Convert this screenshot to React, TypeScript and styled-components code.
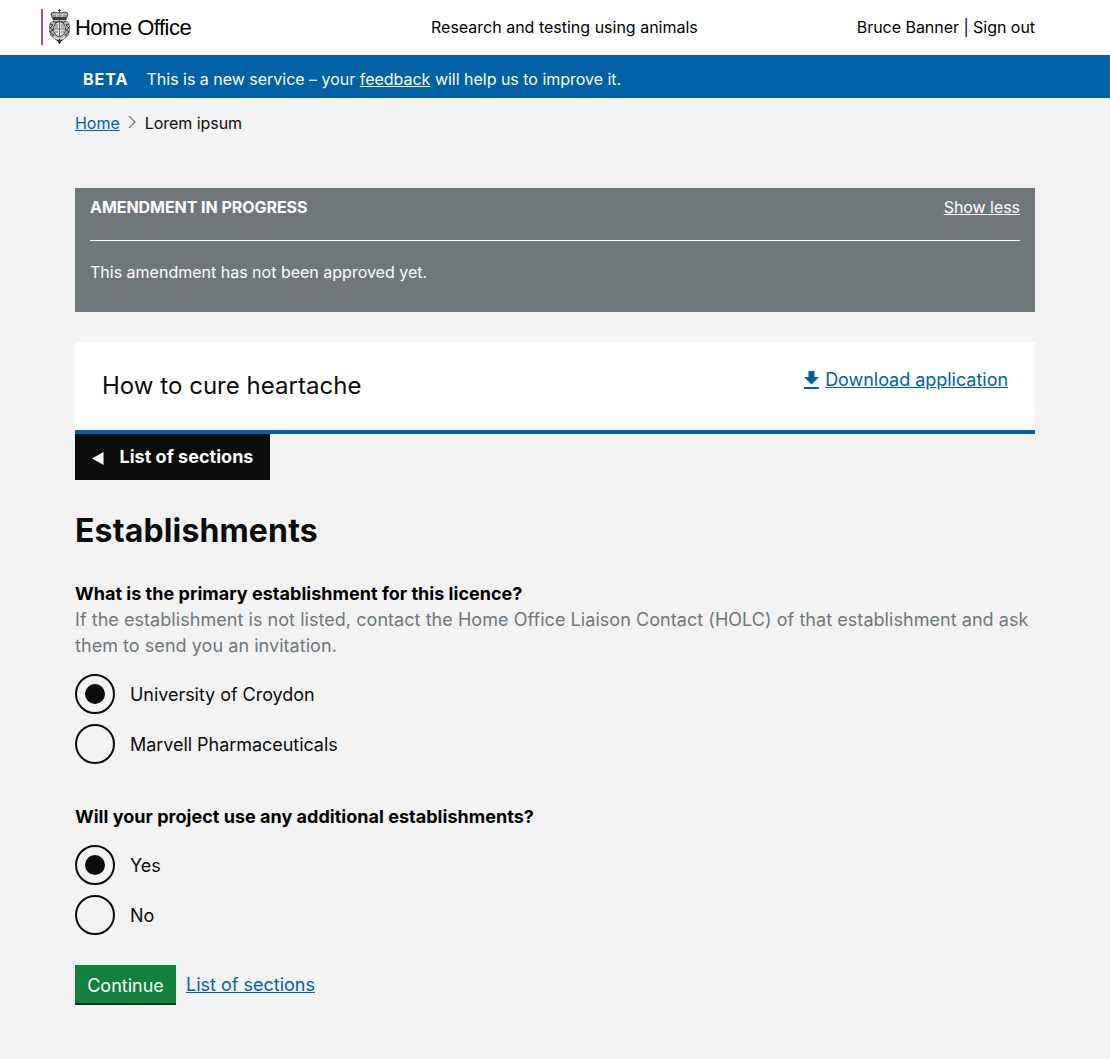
import React, { useState } from 'react';
import styled, { createGlobalStyle } from 'styled-components';

const Global = createGlobalStyle`
  *, *::before, *::after { box-sizing: border-box; }
  body { margin: 0; background: #f3f3f3; color: #0b0c0c; font: 400 18px/26px Inter, sans-serif; letter-spacing: 0; -webkit-font-smoothing: antialiased; }
  p, h1, h2, h3, fieldset, legend { margin: 0; padding: 0; border: 0; font: inherit; }
  a { color: #0061a6; text-underline-offset: auto; }
`;
const Header = styled.header`
  height: 55px; background: #fff; display: grid; grid-template-columns: 390px 1fr auto;
  align-items: center; padding: 0 75px 0 41px; font-size: 16px; line-height: 20px; color: #000;
  > span, > div:last-child { padding-bottom: 2px; }
`;
const Logo = styled.div`
  display: flex; align-items: center; height: 36px; border-left: 2px solid #9152a5; margin-bottom: 1px;
  padding-left: 6px; font: 400 22px/36px "Liberation Sans", sans-serif; letter-spacing: -0.52px;
  > span { padding-top: 1px; }
`;
const Crest = styled.svg` width: 21px; height: 36px; margin-right: 5px; flex: none; `;
const Account = styled.div` justify-self: end; white-space: nowrap; letter-spacing: -0.04px; `;
const BetaBar = styled.div`
  height: 43px; background: #0061a6; color: #fff; padding: 4px 83px 0; display: flex; gap: 18px;
  align-items: center; font-size: 16px; line-height: 20px; letter-spacing: -0.015px; a { color: inherit; }
`;
const Tag = styled.strong` font-weight: 700; letter-spacing: 1px; `;
const Main = styled.main` width: 960px; margin: 0 auto; `;
const Crumbs = styled.nav`
  height: 90px; padding-top: 15px; display: flex; font-size: 16px; line-height: 20px; letter-spacing: -0.04px;
  svg { width: 8px; height: 12px; margin: 3px 9px 0 8px; }
`;
const Banner = styled.section`
  height: 124px; background: #6f777b; color: #fff; padding: 9px 15px; font-size: 16px; line-height: 20px;
  a { color: inherit; letter-spacing: -0.05px; }
`;
const BannerTop = styled.div`
  display: flex; justify-content: space-between; height: 44px; border-bottom: 1px solid #fff; margin-bottom: 21px;
  strong { font-weight: 700; letter-spacing: -0.05px; }
`;
const TitleBar = styled.section`
  margin-top: 30px; height: 92px; background: #fff; border-bottom: 4px solid #0061a6;
  padding: 25px 27px; display: flex; justify-content: space-between;
`;
const Title = styled.h2` font-size: 24px; line-height: 37px; letter-spacing: 0.03px; `;
const Download = styled.span`
  display: flex; gap: 6px; height: 26px; letter-spacing: -0.03px;
  svg { width: 15px; height: 18px; margin-top: 4px; }
`;
const SectionTab = styled.button`
  border: 0; width: 195px; height: 46px; background: #0b0c0c; color: #fff; display: flex; align-items: center;
  padding: 0 16px 0 17px; gap: 15.5px; font: 700 18px/26px Inter, sans-serif; letter-spacing: 0.02px; white-space: nowrap;
  svg { margin-top: 2px; }
`;
const Heading = styled.h1` font-weight: 700; font-size: 32px; line-height: 40px; letter-spacing: 0.15px; margin: 31px 0 30px; `;
const Field = styled.fieldset<{ $gap: number }>` margin-bottom: ${p => p.$gap}px; min-width: 0; `;
const Question = styled.h3` font-weight: 700; color: #000; letter-spacing: 0.025px; `;
const Hint = styled.p` color: #6f777b; letter-spacing: 0.049px; `;
const Options = styled.div<{ $top: number }>` display: grid; gap: 10px; padding-top: ${p => p.$top}px; `;
const Option = styled.label`
  display: flex; align-items: center; gap: 15px; height: 40px; letter-spacing: -0.045px;
  > span { padding-top: 2px; }
`;
const Radio = styled.input`
  appearance: none; width: 40px; height: 40px; margin: 0; border: 2px solid #0b0c0c; border-radius: 50%;
  display: grid; place-items: center;
  &:checked::before { content: ''; width: 20px; height: 20px; border-radius: 50%; background: #0b0c0c; }
`;
const Actions = styled.div` display: flex; align-items: center; gap: 10px; `;
const Continue = styled.button`
  border: 0; width: 101px; height: 40px; background: #10823d; color: #fff; box-shadow: inset 0 -2px #032d13;
  padding: 2px 0 0; font: 400 18px/38px Inter, sans-serif;
`;

function RadioGroup({ name, values, top }: { name: string; values: string[]; top: number }) {
  const [selected, setSelected] = useState(values[0]);
  return <Options $top={top}>{values.map(value => (
    <Option key={value}>
      <Radio type="radio" name={name} checked={selected === value} onChange={() => setSelected(value)} /><span>{value}</span>
    </Option>
  ))}</Options>;
}

export default function App() {
  return <>
    <Global />
    <Header>
      <Logo>
        <Crest viewBox="0 0 21 36" fill="none" stroke="#333" strokeWidth="0.8">
          <path d="M10.500 0v4M9 1.500h3" strokeWidth="1.200" />
          <path d="M4 10 2 6q0-3 3-3l4 1 1.500-1L12 4l4-1q3 0 3 3l-2 4Z" fill="#999" />
          <path d="M4 8.500h13v2H4Z" fill="#333" />
          <path d="M4 5.500h2M8 5.500h2M12 5.500h2M16 5.500h1.500M7 4l1 4M14 4l-1 4" stroke="#eee" />
          <path d="M4 12Q.5 13 .5 17v5q0 5 5.500 8l4.500 3 4.500-3q5.500-3 5.500-8v-5q0-4-3.500-5Z" fill="#bbb" stroke="#666" />
          <ellipse cx="10.500" cy="20" rx="6" ry="7.500" fill="#e5e5e5" stroke="#444" strokeWidth="1" />
          <path d="M10.500 13v14M5 20h11M6 16h3M12 16h3M6 18h3M12 18h3M6 23h3M12 23h3" stroke="#555" />
          <path d="M1 15l3 1-3 3 3 2-3 2 4 3-2 1M20 15l-3 1 3 3-3 2 3 2-4 3 2 1M4 12l3 2 3.500-2 3.500 2 3-2" strokeWidth="1" />
          <path d="M5 28.500l5.500 2 5.500-2" stroke="#eee" strokeWidth="1" />
          <path d="M8 31q2.500 2.500 5 0M10.500 30v5M9 33h3" strokeWidth="1.300" />
        </Crest>
        <span>Home Office</span>
      </Logo>
      <span>Research and testing using animals</span>
      <Account>Bruce Banner | Sign out</Account>
    </Header>
    <BetaBar><Tag>BETA</Tag><span>This is a new service – your <a href="#feedback">feedback</a> will help us to improve it.</span></BetaBar>
    <Main>
      <Crumbs><a href="#home">Home</a><svg viewBox="0 0 8 12" fill="none" stroke="#6f777b" strokeWidth="1.200"><path d="m1 0 6 6-6 6" /></svg><span>Lorem ipsum</span></Crumbs>
      <Banner>
        <BannerTop><strong>AMENDMENT IN PROGRESS</strong><a href="#less">Show less</a></BannerTop>
        <p>This amendment has not been approved yet.</p>
      </Banner>
      <TitleBar>
        <Title>How to cure heartache</Title>
        <Download><svg viewBox="0 0 15 18" fill="#0061a6"><path d="M4.500 0h6v6H15l-7.500 7.500L0 6h4.500ZM0 16h15v2H0Z" /></svg><a href="#download">Download application</a></Download>
      </TitleBar>
      <SectionTab><svg width="12" height="13" viewBox="0 0 12 13" fill="#fff"><path d="M11.500 0v13L0 6.500Z" /></svg>List of sections</SectionTab>
      <Heading>Establishments</Heading>
      <Field $gap={40}>
        <Question>What is the primary establishment for this licence?</Question>
        <Hint>If the establishment is not listed, contact the Home Office Liaison Contact (HOLC) of that establishment and ask them to send you an invitation.</Hint>
        <RadioGroup name="primary" values={['University of Croydon', 'Marvell Pharmaceuticals']} top={15} />
      </Field>
      <Field $gap={30}>
        <Question>Will your project use any additional establishments?</Question>
        <RadioGroup name="additional" values={['Yes', 'No']} top={15} />
      </Field>
      <Actions><Continue>Continue</Continue><a href="#sections">List of sections</a></Actions>
    </Main>
  </>;
}
